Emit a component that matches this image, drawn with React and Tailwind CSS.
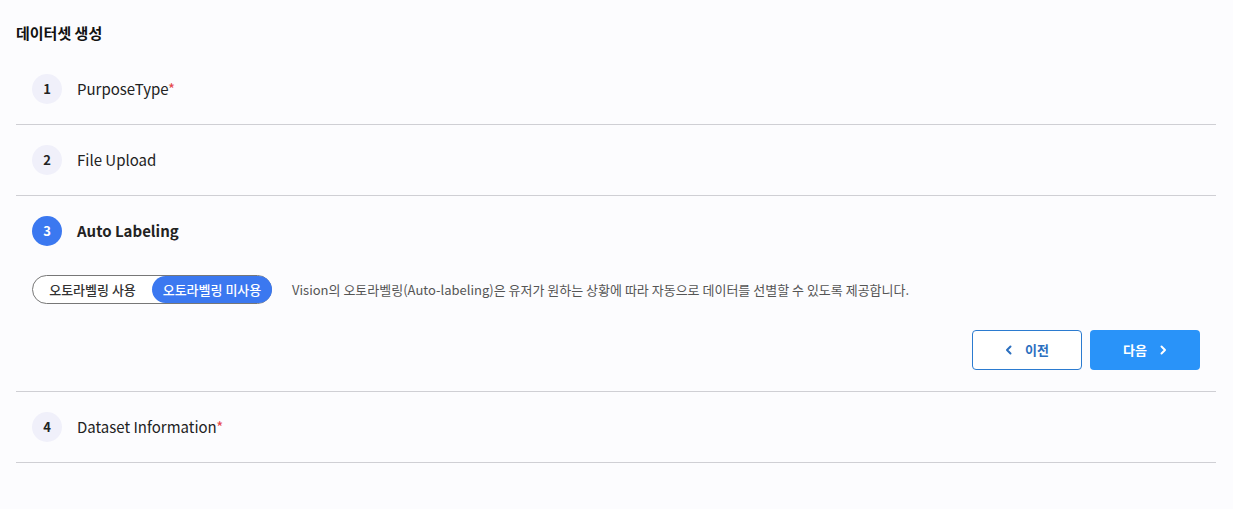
import React, { useState } from 'react';

const font = { fontFamily: '"Noto Sans CJK KR", "Noto Sans", sans-serif' };

function StepHeader({ num, title, required, active }) {
  return (
    <div className="flex items-center gap-[15px] pl-4">
      <div
        className={
          'w-[30px] h-[30px] rounded-full flex items-center justify-center text-[13px] font-bold ' +
          (active ? 'bg-[#3b78f0] text-white' : 'bg-[#f0f0fa] text-[#222]')
        }
      >
        {num}
      </div>
      <span className={'text-[15px] text-[#222] ' + (active ? 'font-bold' : 'font-normal')}>
        {title}
        {required && <span className="text-[#e5484d]">*</span>}
      </span>
    </div>
  );
}

export default function App() {
  const [autoLabel, setAutoLabel] = useState(false);

  return (
    <div className="min-h-[509px] bg-[#fcfcfe] pl-4 pr-[17px] pt-[21px]" style={font}>
      <h1 className="text-[15px] font-bold text-[#111] leading-[24px] mb-[9px]">데이터셋 생성</h1>

      <div className="border-b border-[#cfcfd4] py-5">
        <StepHeader num="1" title="PurposeType" required />
      </div>

      <div className="border-b border-[#cfcfd4] py-5">
        <StepHeader num="2" title="File Upload" />
      </div>

      <div className="border-b border-[#cfcfd4] pt-5 pb-[21px]">
        <StepHeader num="3" title="Auto Labeling" active />
        <div className="flex items-center pl-4 mt-[29px]">
          <div className="flex items-center h-[29px] w-[240px] rounded-full border border-[#777] bg-white">
            <button
              onClick={() => setAutoLabel(true)}
              className={
                'h-full flex-1 rounded-full text-[13px] font-medium flex items-center justify-center ' +
                (autoLabel ? 'bg-[#3b78f0] text-white' : 'text-[#333]')
              }
            >
              오토라벨링 사용
            </button>
            <button
              onClick={() => setAutoLabel(false)}
              className={
                'h-full w-[120px] -mr-px rounded-full text-[13px] font-medium flex items-center justify-center ' +
                (!autoLabel ? 'bg-[#3b78f0] text-white' : 'text-[#333]')
              }
            >
              오토라벨링 미사용
            </button>
          </div>
          <p className="ml-5 text-[13px] text-[#555]">
            Vision의 오토라벨링(Auto-labeling)은 유저가 원하는 상황에 따라 자동으로 데이터를 선별할 수 있도록 제공합니다.
          </p>
        </div>
        <div className="flex justify-end gap-2 pr-4 mt-[26px]">
          <button className="w-[110px] h-10 rounded border border-[#2b7bd0] bg-white text-[#2b6fbf] text-[13px] font-bold flex items-center justify-center gap-3">
            <svg width="8" height="10" viewBox="0 0 8 10" fill="none">
              <path d="M5.5 1.5L2 5l3.5 3.5" stroke="currentColor" strokeWidth="2" strokeLinecap="round" strokeLinejoin="round" />
            </svg>
            이전
          </button>
          <button className="w-[110px] h-10 rounded bg-[#2993f9] text-white text-[13px] font-bold flex items-center justify-center gap-3">
            다음
            <svg width="8" height="10" viewBox="0 0 8 10" fill="none">
              <path d="M2.5 1.5L6 5 2.5 8.5" stroke="currentColor" strokeWidth="2" strokeLinecap="round" strokeLinejoin="round" />
            </svg>
          </button>
        </div>
      </div>

      <div className="border-b border-[#cfcfd4] py-5">
        <StepHeader num="4" title="Dataset Information" required />
      </div>
    </div>
  );
}
